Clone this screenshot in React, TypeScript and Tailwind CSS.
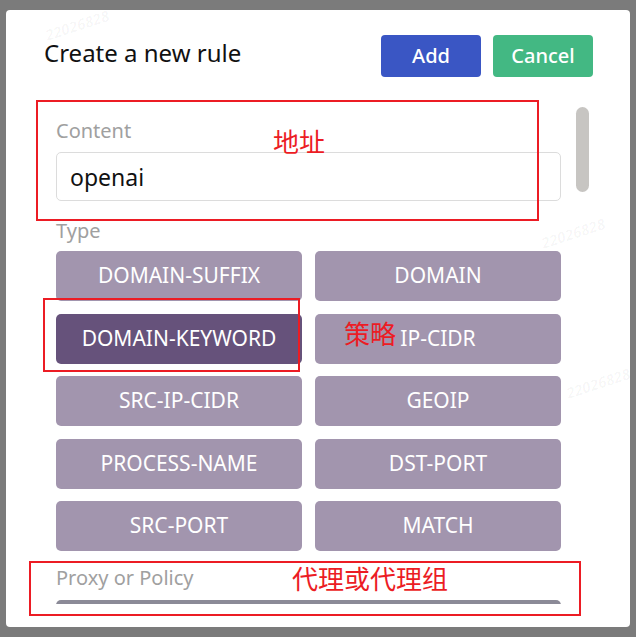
import React, { useState } from 'react';

const ruleTypes = [
  'DOMAIN-SUFFIX',
  'DOMAIN',
  'DOMAIN-KEYWORD',
  'IP-CIDR',
  'SRC-IP-CIDR',
  'GEOIP',
  'PROCESS-NAME',
  'DST-PORT',
  'SRC-PORT',
  'MATCH',
];

// faint screenshot watermarks, only in empty spots
const marks = [
  { left: 44, top: 14 },
  { left: 540, top: 222 },
  { left: 565, top: 372 },
];

export default function App() {
  const [content, setContent] = useState('openai');
  const [selected, setSelected] = useState('DOMAIN-KEYWORD');

  return (
    <div
      className="relative w-[636px] h-[637px] overflow-hidden bg-[#7b7b7b] pt-[10px] pl-[6px]"
      style={{ fontFamily: '"Noto Sans", "Noto Sans CJK SC", sans-serif' }}
    >
      <div className="w-[624px] h-[617px] bg-white rounded-[4px] flex flex-col">
        {/* Header */}
        <div className="h-[90px] shrink-0 flex items-start justify-between pl-[38px] pr-[37px] pt-[25px]">
          <h2 className="text-[24px] leading-[36px] text-[#111]">Create a new rule</h2>
          <div className="flex gap-[12px]">
            <button className="w-[100px] h-[42px] rounded-[4px] bg-[#3a56c4] text-white text-[20px] font-medium">
              Add
            </button>
            <button className="w-[100px] h-[42px] rounded-[4px] bg-[#43b883] text-white text-[20px] font-medium">
              Cancel
            </button>
          </div>
        </div>

        {/* Body */}
        <div className="relative h-[504px] shrink-0 overflow-hidden">
          <div className="pl-[50px] pt-[19px] w-[555px]">
            <label className="block text-[20px] leading-[24px] text-[#a0a0a0]">Content</label>
            <input
              value={content}
              onChange={e => setContent(e.target.value)}
              className="mt-[9px] w-[505px] h-[49px] rounded-[5px] border border-[#dcdcdc] px-[13px] text-[23px] text-[#111] outline-none"
            />
            <label className="block mt-[18px] text-[20px] leading-[24px] text-[#a0a0a0]">Type</label>
            <div className="mt-[8px] grid grid-cols-2 gap-x-[13px] gap-y-[12.5px] w-[505px]">
              {ruleTypes.map(t => (
                <button
                  key={t}
                  onClick={() => setSelected(t)}
                  className={`h-[50px] rounded-[5px] text-white text-[21px] ${
                    selected === t ? 'bg-[#66527b]' : 'bg-[#a295ae]'
                  }`}
                >
                  {t}
                </button>
              ))}
            </div>
            <label className="block mt-[15px] text-[20px] leading-[24px] text-[#a0a0a0]">Proxy or Policy</label>
            <div className="mt-[10px] h-[50px] w-[505px] rounded-[5px] border-t-[4px] border-[#8b8a97]" />
          </div>
          <div className="absolute left-[570px] top-[7px] w-[13px] h-[85px] rounded-full bg-[#c7c5c2]" />
        </div>
      </div>

      {/* watermarks */}
      {marks.map((m, i) => (
        <span
          key={i}
          className="absolute text-[15px] font-bold italic text-black/[0.035] -rotate-[18deg] select-none"
          style={{ left: m.left, top: m.top }}
        >
          22026828
        </span>
      ))}

      {/* red annotations */}
      <div className="absolute left-[36px] top-[100px] w-[503px] h-[121px] border-2 border-[#ec1c24]" />
      <div className="absolute left-[43px] top-[298px] w-[257px] h-[74px] border-2 border-[#ec1c24]" />
      <div className="absolute left-[29px] top-[561px] w-[552px] h-[55px] border-2 border-[#ec1c24]" />
      <span className="absolute left-[273px] top-[125px] text-[26px] leading-[34px] text-[#ec1c24]">地址</span>
      <span className="absolute left-[344px] top-[317px] text-[26px] leading-[34px] text-[#ec1c24]">策略</span>
      <span className="absolute left-[292px] top-[562px] text-[26px] leading-[34px] text-[#ec1c24]">代理或代理组</span>
    </div>
  );
}
